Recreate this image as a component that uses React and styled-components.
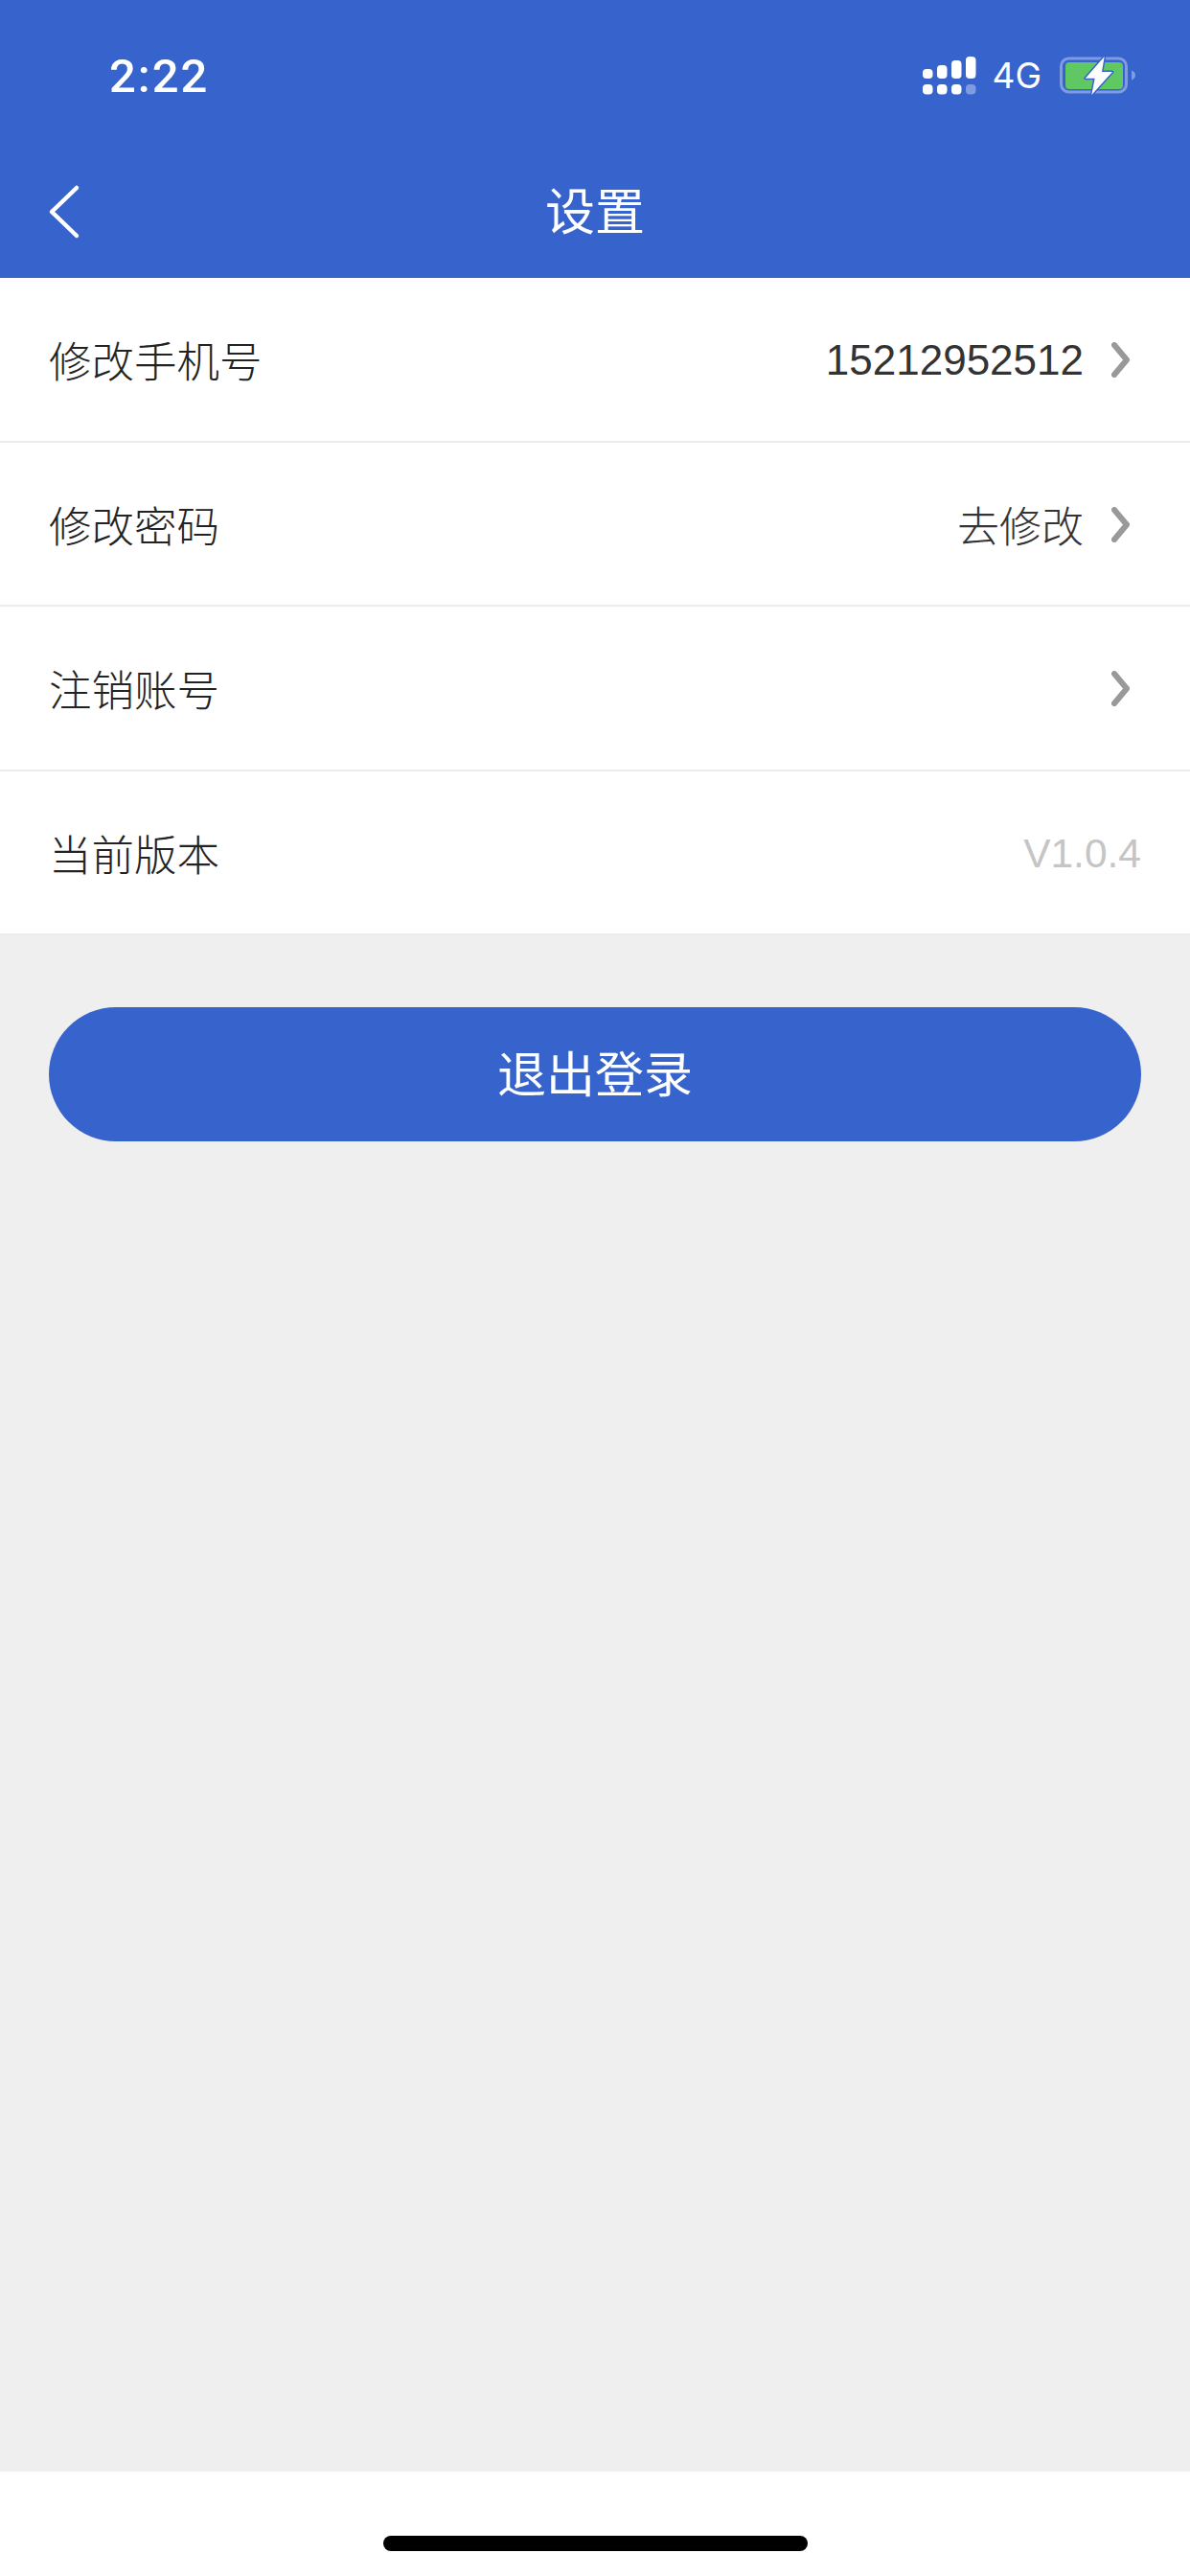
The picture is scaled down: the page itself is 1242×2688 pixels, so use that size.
import styled, { createGlobalStyle } from "styled-components";

const GlobalStyle = createGlobalStyle`
    html, body {
        margin: 0;
        padding: 0;
        background: #fff;
    }
    * {
        box-sizing: border-box;
    }
`;

const FONT = `"Liberation Sans", "Noto Sans CJK SC", sans-serif`;
const BLUE = "#3663cc";

const Container = styled.div`
    width: 1242px;
    height: 2688px;
    display: flex;
    flex-direction: column;
    background: #fff;
    font-family: ${FONT};
`;

//Header
const Header = styled.header`
    height: 290px;
    flex-shrink: 0;
    background: ${BLUE};
    color: #fff;
    display: flex;
    flex-direction: column;
`;

const StatusBar = styled.div`
    height: 189px;
    display: flex;
    align-items: flex-start;
    justify-content: space-between;
    padding: 49px 56px 0 114px;
`;

const Time = styled.span`
    font-family: Roboto, sans-serif;
    font-size: 49px;
    font-weight: 500;
    line-height: 56px;
    letter-spacing: 2px;
    margin-top: 3px;
`;

const StatusIcons = styled.div`
    display: flex;
    align-items: center;
    margin-top: 6px;
`;

const Network = styled.span`
    font-family: Inter, sans-serif;
    font-size: 37px;
    line-height: 40px;
    margin: 0 19px 0 16px;
`;

const NavBar = styled.nav`
    display: grid;
    grid-template-columns: 1fr auto 1fr;
    align-items: center;
    padding-left: 48px;
    height: 60px;
`;

const BackButton = styled.button`
    display: flex;
    padding: 0;
    border: 0;
    background: none;
    justify-self: start;
`;

const Title = styled.h1`
    margin: 0;
    padding-top: 3px;
    font-size: 52px;
    font-weight: 400;
    line-height: 60px;
    transform: translateX(-24px);
`;

//Settings list
const List = styled.section`
    background: #fff;
`;

const Row = styled.div`
    height: 171.5px;
    display: flex;
    align-items: center;
    justify-content: space-between;
    padding: 0 51px;
    border-bottom: 2px solid #ececec;
`;

const Label = styled.span`
    font-size: 44.5px;
    font-weight: 300;
    color: #222;
`;

const Value = styled.div`
    display: flex;
    align-items: center;
    padding-top: 2px;
    font-size: 44px;
    font-weight: 300;
    color: #333;
`;

const Version = styled.span`
    padding-top: 3px;
    font-size: 42.5px;
    color: #c5c5c5;
`;

const Chevron = styled.svg`
    margin-left: 29px;
    margin-right: 12px;
`;

//Logout
const Body = styled.main`
    flex: 1;
    background: #efefef;
    padding: 75px 51px 0;
`;

const LogoutButton = styled.button`
    width: 100%;
    height: 140px;
    padding: 0 0 6px;
    border: 0;
    border-radius: 70px;
    background: ${BLUE};
    color: #fff;
    font-family: ${FONT};
    font-size: 51px;
    font-weight: 400;
`;

//Home indicator
const HomeArea = styled.div`
    height: 109px;
    flex-shrink: 0;
    display: flex;
    justify-content: center;
    padding-top: 67px;
`;

const HomeBar = styled.div`
    width: 443px;
    height: 16px;
    border-radius: 8px;
    background: #000;
`;

const SignalIcon = () => {
    const tops = [72, 68, 63, 59];
    return (
        <svg width="56" height="40" viewBox="0 0 56 40">
            {tops.map((top, i) => (
                <g key={i}>
                    <rect x={i * 15} y={top - 59} width="10.5" height={82 - top} rx="4" fill="#fff" />
                    <rect x={i * 15} y="29" width="10.5" height="10.5" rx="4" fill={i === 3 ? "#7f9be2" : "#fff"} />
                </g>
            ))}
        </svg>
    );
};

const BatteryIcon = () => (
    <svg width="80" height="48" viewBox="0 0 80 48">
        <rect x="1.5" y="6" width="68" height="35" rx="8" fill="none" stroke="#7f9be2" strokeWidth="3" />
        <rect x="6" y="10" width="60" height="28" rx="4" fill="#5fc862" />
        <path d="M75 18.5c2.500.8 4 2.600 4 5s-1.500 4.200-4 5z" fill="#7f9be2" />
        <path
            d="M46.700 4 26.700 26.700h10L33.300 44 55 20H44z"
            fill="#fff"
            stroke={BLUE}
            strokeWidth="3"
            strokeLinejoin="round"
            paintOrder="stroke"
        />
    </svg>
);

const RowChevron = () => (
    <Chevron width="19" height="37" viewBox="0 0 19 37">
        <path d="M3 3 16 18.500 3 34" fill="none" stroke="#999" strokeWidth="6" strokeLinecap="round" strokeLinejoin="round" />
    </Chevron>
);

const App = () => {
    return (
        <Container>
            <GlobalStyle />
            <Header>
                <StatusBar>
                    <Time>2:22</Time>
                    <StatusIcons>
                        <SignalIcon />
                        <Network>4G</Network>
                        <BatteryIcon />
                    </StatusIcons>
                </StatusBar>
                <NavBar>
                    <BackButton aria-label="返回">
                        <svg width="36" height="58" viewBox="0 0 36 58">
                            <path d="M32 4 6 29 32 54" fill="none" stroke="#fff" strokeWidth="4.500" strokeLinecap="round" strokeLinejoin="round" />
                        </svg>
                    </BackButton>
                    <Title>设置</Title>
                </NavBar>
            </Header>
            <List>
                <Row>
                    <Label>修改手机号</Label>
                    <Value>
                        15212952512
                        <RowChevron />
                    </Value>
                </Row>
                <Row>
                    <Label>修改密码</Label>
                    <Value>
                        去修改
                        <RowChevron />
                    </Value>
                </Row>
                <Row>
                    <Label>注销账号</Label>
                    <Value>
                        <RowChevron />
                    </Value>
                </Row>
                <Row>
                    <Label>当前版本</Label>
                    <Version>V1.0.4</Version>
                </Row>
            </List>
            <Body>
                <LogoutButton>退出登录</LogoutButton>
            </Body>
            <HomeArea>
                <HomeBar />
            </HomeArea>
        </Container>
    );
};

export default App;
